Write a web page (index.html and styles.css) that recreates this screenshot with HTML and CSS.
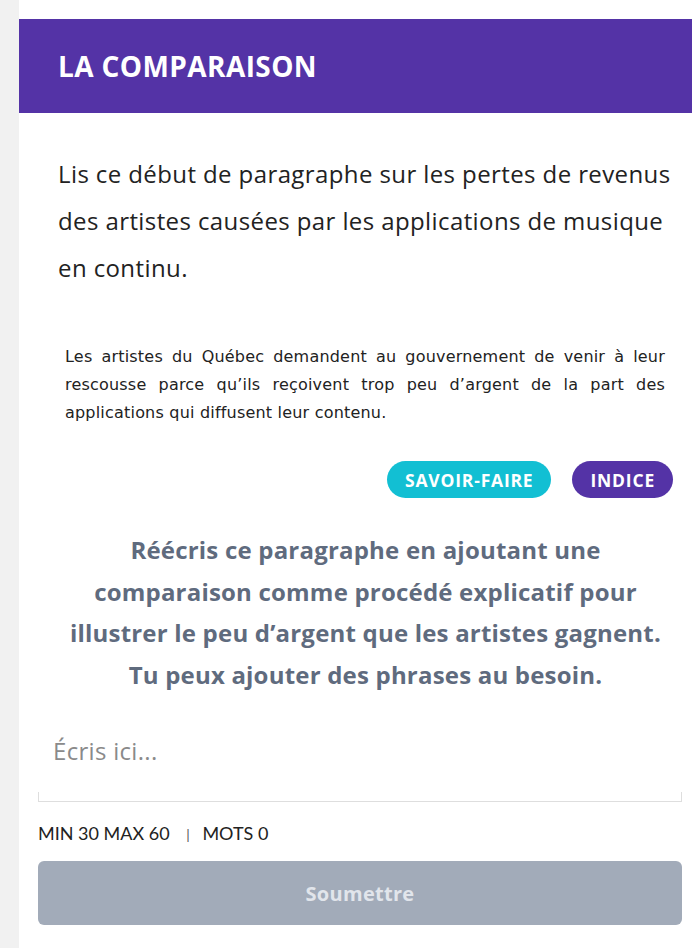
FILE: index.html
```html
<!DOCTYPE html>
<html lang="fr">
<head>
  <meta charset="UTF-8">
  <title>La comparaison</title>
  <link rel="stylesheet" href="styles.css">
</head>
<body>
  <div class="card">
    <div class="card-header">
      <h1 class="title">LA COMPARAISON</h1>
    </div>
    <div class="card-body">
      <p class="intro">Lis ce début de paragraphe sur les pertes de revenus des artistes causées par les applications de musique en continu.</p>
      <p class="quote">Les artistes du Québec demandent au gouvernement de venir à leur rescousse parce qu’ils reçoivent trop peu d’argent de la part des applications qui diffusent leur contenu.</p>
      <div class="tags">
        <button class="tag tag-skill">SAVOIR-FAIRE</button>
        <button class="tag tag-hint">INDICE</button>
      </div>
      <p class="question">Réécris ce paragraphe en ajoutant une comparaison comme procédé explicatif pour illustrer le peu d’argent que les artistes gagnent. Tu peux ajouter des phrases au besoin.</p>
    </div>
    <div class="answer">
      <div class="answer-box">
        <div class="placeholder">Écris ici...</div>
        <div class="answer-edge"></div>
      </div>
      <div class="counter">MIN 30 MAX 60 <span class="sep">|</span> MOTS 0</div>
      <button class="submit" disabled>Soumettre</button>
    </div>
  </div>
</body>
</html>
```

FILE: styles.css
```css
body {
  margin: 0;
  background-color: #f1f1f1;
  font-family: "Open Sans", Lato, sans-serif;
  color: #222;
}

.card {
  margin-left: 19px;
  min-height: 948px;
  background-color: #fff;
  padding-top: 19px;
  box-sizing: border-box;
}
.card-header {
  background-color: #5433a6;
  height: 94px;
  display: flex;
  align-items: center;
  padding-left: 39px;
}
.title {
  margin: 0;
  color: #fff;
  font-size: 28px;
  font-weight: bold;
  letter-spacing: 0.4px;
}

.card-body {
  padding: 0 19px 0 39px;
}
.intro {
  margin: 37px 0 0;
  font-size: 24px;
  letter-spacing: 0.4px;
  line-height: 47px;
}
.quote {
  margin: 52px 8px 0 7px;
  font-family: "DejaVu Sans", sans-serif;
  font-size: 16px;
  letter-spacing: 0.2px;
  line-height: 28px;
  text-align: justify;
}

.tags {
  display: flex;
  justify-content: flex-end;
  gap: 21px;
  margin-top: 34px;
}
.tag {
  border: none;
  border-radius: 19px;
  height: 37px;
  padding: 0 18px;
  color: #fff;
  font-family: "Open Sans", sans-serif;
  font-size: 17.5px;
  font-weight: bold;
  letter-spacing: 0.8px;
}
.tag-skill {
  background-color: #12bfd3;
}
.tag-hint {
  background-color: #5433a6;
}

.question {
  margin: 31px 3px 0;
  text-align: center;
  color: #5f6b7e;
  font-size: 24px;
  font-weight: bold;
  letter-spacing: 0.2px;
  line-height: 41.5px;
}

.answer {
  padding: 0 10px 0 19px;
}
.answer-box {
  margin-top: 39px;
}
.placeholder {
  padding: 0 15px;
  font-size: 24px;
  letter-spacing: 0.3px;
  color: #8a8a8a;
  height: 58px;
}
.answer-edge {
  height: 9px;
  border: 1px solid #dedede;
  border-top: none;
}
.counter {
  margin-top: 20px;
  font-family: Lato, sans-serif;
  font-size: 18px;
  color: #222;
}
.sep {
  margin: 0 8px 0 12px;
  color: #555;
  font-size: 14px;
}
.submit {
  display: block;
  margin-top: 17px;
  width: 100%;
  height: 64px;
  border: none;
  border-radius: 6px;
  background-color: #a2abb9;
  color: #e1e5eb;
  font-family: "Open Sans", sans-serif;
  font-size: 20px;
  font-weight: bold;
  letter-spacing: 0.3px;
}
```
